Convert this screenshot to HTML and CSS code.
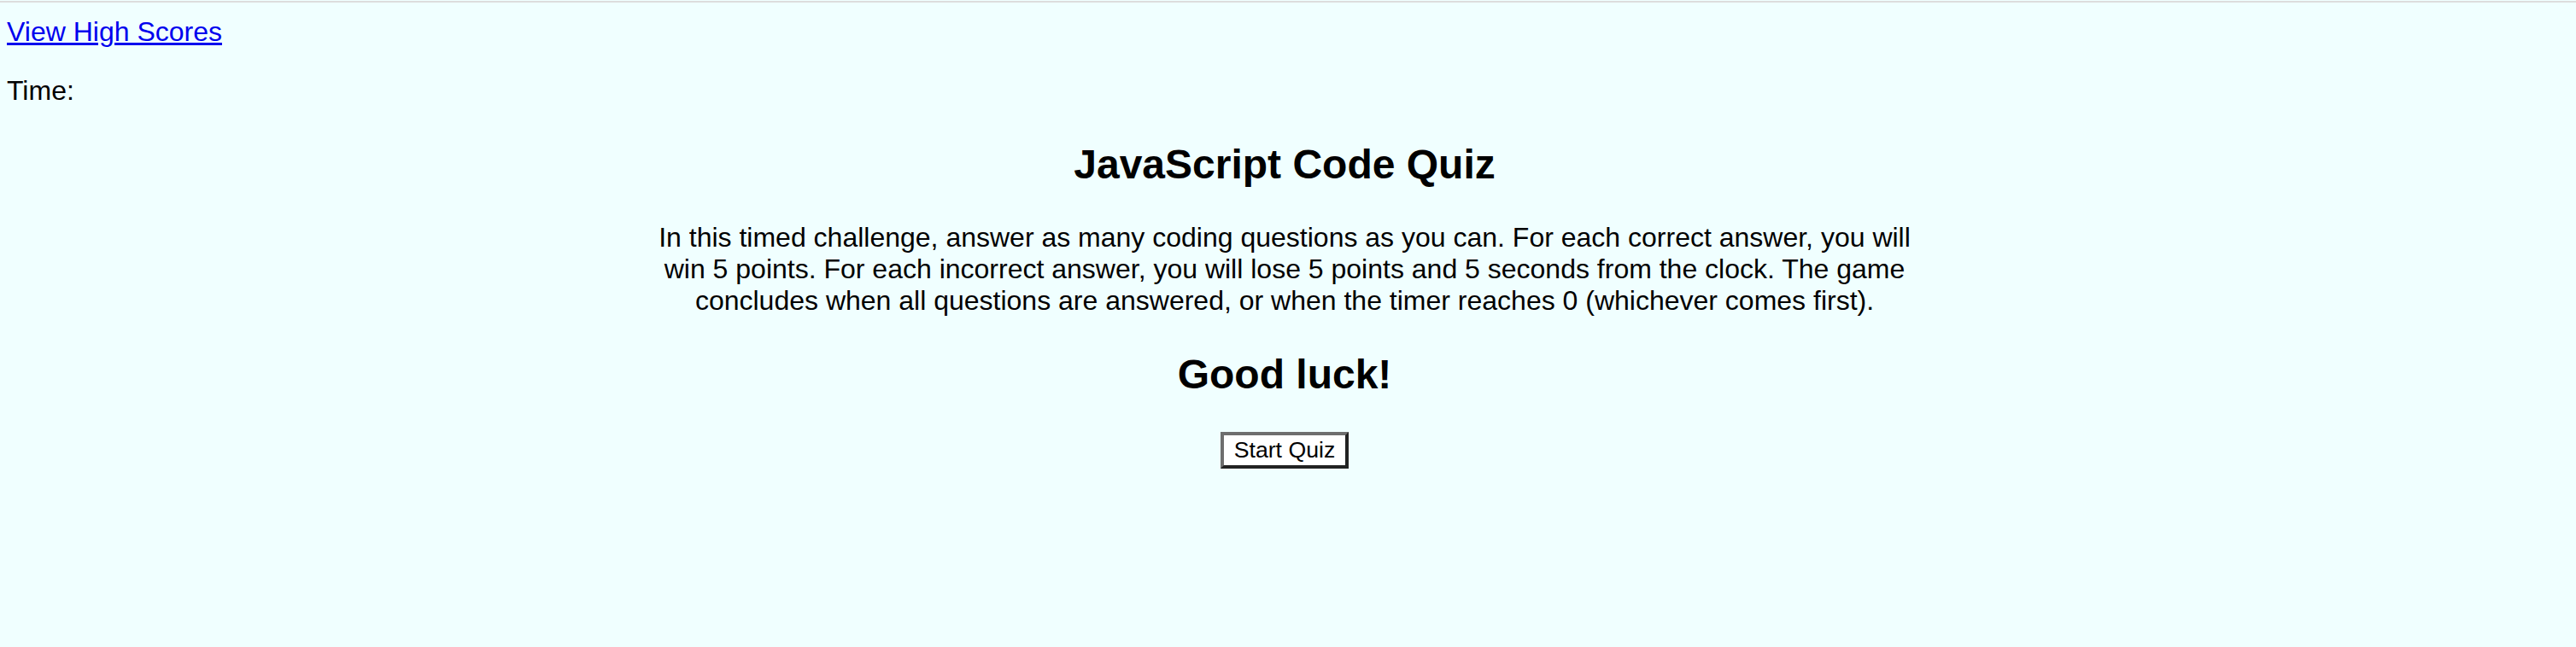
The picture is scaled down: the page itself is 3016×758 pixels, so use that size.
FILE: index.html
```html
<!DOCTYPE html>
<html lang="en">
<head>
<meta charset="utf-8">
<title>JavaScript Code Quiz</title>
<link rel="stylesheet" href="styles.css">
</head>
<body>
<div class="topline"></div>
<header class="header">
  <a class="scores-link" href="#">View High Scores</a>
  <p class="timer">Time:</p>
</header>
<main class="intro">
  <h2 class="title">JavaScript Code Quiz</h2>
  <p class="desc">In this timed challenge, answer as many coding questions as you can. For each correct answer, you will win 5 points. For each incorrect answer, you will lose 5 points and 5 seconds from the clock. The game concludes when all questions are answered, or when the timer reaches 0 (whichever comes first).</p>
  <h2 class="title">Good luck!</h2>
  <button class="start-btn" type="button">Start Quiz</button>
</main>
</body>
</html>
```
FILE: styles.css
```css
html {
  background: #f0ffff;
}
body {
  margin: 0;
  padding: 0 16px 0 8px;
  font-family: "Liberation Sans", Arial, sans-serif;
  font-size: 32px;
  background: #f0ffff;
  color: #000;
}
.topline {
  height: 2px;
  margin: 0 -16px 0 -8px;
  border-top: 1px solid #f0ffff;
  background: #dddddd;
}
.header {
  padding-top: 16px;
}
.scores-link {
  color: #0000ee;
  text-decoration: underline;
}
.timer {
  margin: 32px 0;
}
.intro {
  width: 1500px;
  margin: 0 auto;
  text-align: center;
}
.title {
  font-size: 48px;
  font-weight: bold;
  margin: 40px 0;
}
.desc {
  margin: 40px 0;
}
.start-btn {
  font-family: "Liberation Sans", Arial, sans-serif;
  font-size: 26.67px;
  background: #ffffff;
  color: #000;
  padding: 2px 12px;
  border-width: 4px;
  border-style: solid;
  border-color: #6e6e6e #222222 #222222 #6e6e6e;
  margin: 0;
}
```
